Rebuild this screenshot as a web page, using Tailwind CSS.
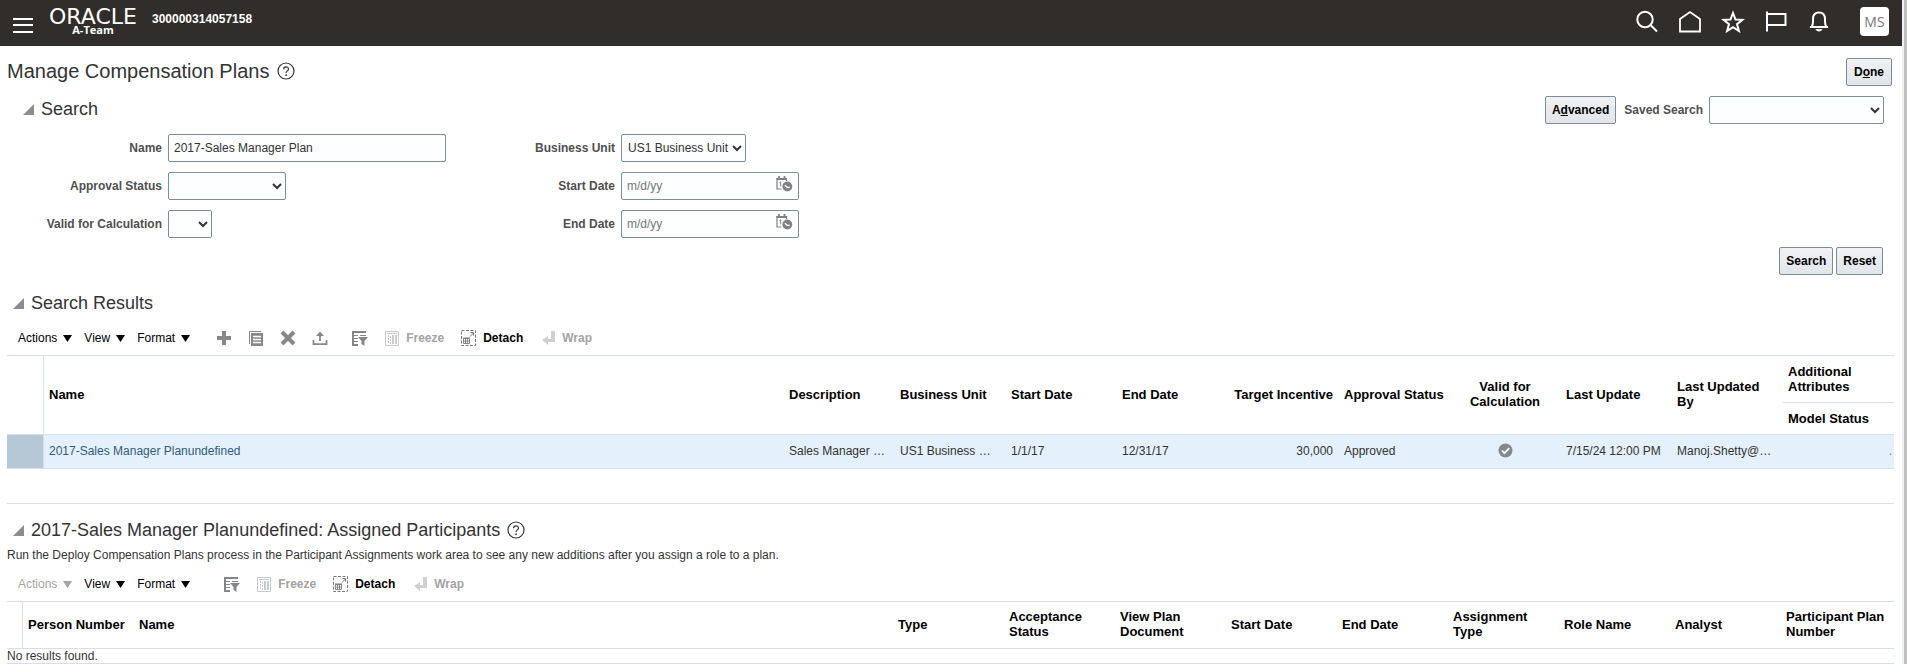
<!DOCTYPE html>
<html lang="en">
<head>
    <meta charset="UTF-8">
    <meta name="viewport" content="width=device-width, initial-scale=1.0">
    <title>Manage Compensation Plans</title>
    <script src="https://cdn.jsdelivr.net/npm/@tailwindcss/browser@4"></script>
</head>
<body class="flex min-h-screen bg-white font-['Liberation_Sans',Arial,sans-serif] text-xs text-[#333]">

<!-- Icon sprite -->
<svg class="hidden" aria-hidden="true">
    <symbol id="i-help" viewBox="0 0 18 18">
        <circle cx="9" cy="9" r="8" fill="none" stroke="#333" stroke-width="1.2"/>
        <path d="M6.6 7.2c0-3.2 4.9-3.1 4.9-.2 0 1.9-2.4 1.9-2.4 4" fill="none" stroke="#333" stroke-width="1.2"/>
        <circle cx="9.1" cy="13.2" r=".9" fill="#333"/>
    </symbol>
    <symbol id="i-disclose" viewBox="0 0 11 11">
        <path d="M11 0v11H0z" fill="#8a8c90"/>
    </symbol>
    <symbol id="i-caret" viewBox="0 0 9 7">
        <path d="M0 0h9L4.5 7z" fill="currentColor"/>
    </symbol>
    <symbol id="i-filter" viewBox="0 0 16 16">
        <path d="M0 1h14v2H2v11h4v2H0z" fill="#85878b"/>
        <path d="M2 5.500h4M8 5.500h6M2 8.500h4M2 11.500h4" stroke="#85878b" stroke-width="1"/>
        <path d="M6 7h10l-3.500 4v5l-3-2v-3z" fill="#85878b"/>
    </symbol>
    <symbol id="i-freeze" viewBox="0 0 15 15">
        <path d="M.5.500h13v14H.5z" fill="none" stroke="#c9cacb"/>
        <path d="M2 2.500h10" stroke="#c9cacb"/>
        <path d="M3.500 4v9M5.500 5v8" stroke="#c9cacb" stroke-dasharray="2 1"/>
        <path d="M8 4v9M11 4v9" stroke="#c9cacb" stroke-width="2"/>
    </symbol>
    <symbol id="i-detach" viewBox="0 0 16 16">
        <path d="M.5.500h14v15H.5z" fill="none" stroke="#777" stroke-dasharray="3 1.500"/>
        <path d="M2.500 8.500h6v5h-6zM2.500 11h6M4.500 8v5.500M6.500 8v5.500" fill="none" stroke="#888"/>
        <path d="M2 8h7" stroke="#777"/>
        <path d="M9 6.500l3.500-3.500M9.500 2.500h3v3" fill="none" stroke="#777"/>
    </symbol>
    <symbol id="i-wrap" viewBox="0 0 14 14">
        <path d="M9 0h4v11H6v3L0 9l6-4v3h3z" fill="#cfd0d1"/>
    </symbol>
    <symbol id="i-calendar" viewBox="0 0 17 16">
        <path d="M10.500 5V2.500H1v10.500h4.500" fill="none" stroke="#7f8184" stroke-width="1.200"/>
        <path d="M.5 3h10.500M3 0v3M8.500 0v3" stroke="#7f8184" stroke-width="1.800"/>
        <path d="M3.500 6.500L4.700 5.700V10.500" fill="none" stroke="#7f8184"/>
        <circle cx="11.300" cy="10.500" r="4.900" fill="#7f8184"/>
        <path d="M8.800 9.300l2.500 2h2.500" fill="none" stroke="#fff" stroke-width="1.200"/>
    </symbol>
</svg>

<div class="min-w-0 flex-1">
    <!-- Header -->
    <header class="flex h-[46px] items-start justify-between bg-[#312d2a] pr-[13px] pl-[13px] text-white">
        <div class="flex">
            <button type="button" aria-label="Navigator" class="pt-[15px]">
                <svg class="h-4 w-5" viewBox="0 0 20 16"><path d="M0 2h20M0 8h20M0 15h20" stroke="#fff" stroke-width="2"/></svg>
            </button>
            <a href="#" class="ml-2 flex w-[104px] flex-col items-center pt-[9px]">
                <span class="h-4 font-['DejaVu_Sans',sans-serif] text-[22px] leading-4">ORACLE</span>
                <span class="font-['Open_Sans',sans-serif] text-[11px] leading-[10px] font-bold">A-Team</span>
            </a>
            <span class="ml-[7px] pt-[11px] leading-4 font-bold">300000314057158</span>
        </div>
        <div class="flex items-center pt-[7px]">
            <div class="flex gap-[19px]">
                <button type="button" aria-label="Search">
                    <svg class="size-6" viewBox="0 0 24 24" fill="none" stroke="#fff" stroke-width="2"><circle cx="10" cy="9.500" r="7.700"/><path d="M15.500 15l6.500 6.500"/></svg>
                </button>
                <button type="button" aria-label="Home">
                    <svg class="size-6" viewBox="0 0 24 24" fill="none" stroke="#fff" stroke-width="1.800"><path d="M2 21.500V9L12 2l10 7v12.500z"/></svg>
                </button>
                <button type="button" aria-label="Favorites">
                    <svg class="size-6" viewBox="0 0 24 24" fill="none" stroke="#fff" stroke-width="2"><path d="M12 3l2.500 6.500 7 .3-5.500 4.300 1.900 6.900L12 17.100l-5.900 3.900L8 14.100 2.500 9.800l7-.3z"/></svg>
                </button>
                <button type="button" aria-label="Watchlist">
                    <svg class="size-6" viewBox="0 0 24 24" fill="none" stroke="#fff" stroke-width="2"><path d="M3 1.500v20M3 4h18.500v11H3"/></svg>
                </button>
                <button type="button" aria-label="Notifications">
                    <svg class="size-6" viewBox="0 0 24 24" fill="none" stroke="#fff" stroke-width="2"><path d="M4.500 17C6.500 14.500 6 12.500 6 9c0-4.500 2.500-6.500 6-6.500S18 4.500 18 9c0 3.500-.5 5.500 1.500 8zM3 17h18"/><path d="M8.500 19h7c-.7 3.300-6.300 3.300-7 0z" fill="#fff" stroke="none"/></svg>
                </button>
            </div>
            <button type="button" class="ml-[29px] size-[29px] rounded bg-white font-['Open_Sans',sans-serif] text-sm text-[#777]">MS</button>
        </div>
    </header>

    <main class="pt-3 pr-2 pl-[7px]">
        <div class="flex h-7 items-center justify-between pr-[2px]">
            <h1 class="flex items-center gap-2 pb-[2px] text-xl">Manage Compensation Plans <svg class="size-[18px]"><use href="#i-help"/></svg></h1>
            <button type="button" class="h-7 rounded-xs border border-[#7b8b98] bg-linear-to-b from-[#f0f2f4] to-[#e1e5e9] px-[7px] font-bold text-black">D<u>o</u>ne</button>
        </div>

        <!-- Search -->
        <section>
            <div class="mt-[10px] flex h-7 items-center justify-between pr-[10px] pl-4">
                <h2 class="flex items-center gap-[7px] pb-[2px] text-lg"><svg class="size-[11px]"><use href="#i-disclose"/></svg>Search</h2>
                <div class="flex items-center">
                    <button type="button" class="mr-2 h-7 rounded-xs border border-[#7b8b98] bg-linear-to-b from-[#f0f2f4] to-[#e1e5e9] px-[6px] font-bold text-black">A<u>d</u>vanced</button>
                    <label for="saved-search" class="mr-[6px] font-bold text-[#4f4f4f]">Saved Search</label>
                    <select id="saved-search" class="h-7 w-[175px] rounded-xs border border-[#7b8e9b] bg-[#fcfeff]"><option></option></select>
                </div>
            </div>

            <form>
                <div class="mt-[10px] grid grid-cols-[155px_278px_163px_178px] items-center gap-x-[6px] gap-y-[10px]">
                    <label for="name" class="text-right font-bold text-[#4f4f4f]">Name</label>
                    <input id="name" type="text" value="2017-Sales Manager Plan" class="h-7 w-full rounded-xs border border-[#7b8e9b] bg-[#fcfeff] px-[5px]">
                    <label for="business-unit" class="text-right font-bold text-[#4f4f4f]">Business Unit</label>
                    <select id="business-unit" class="h-7 w-[125px] rounded-xs border border-[#7b8e9b] bg-[#fcfeff] pl-[2px]"><option>US1 Business Unit</option></select>

                    <label for="approval-status" class="text-right font-bold text-[#4f4f4f]">Approval Status</label>
                    <select id="approval-status" class="h-7 w-[118px] rounded-xs border border-[#7b8e9b] bg-[#fcfeff]"><option></option></select>
                    <label for="start-date" class="text-right font-bold text-[#4f4f4f]">Start Date</label>
                    <div class="flex h-7 rounded-xs border border-[#7b8e9b] bg-[#fcfeff] pr-[5px] pl-[5px]">
                        <input id="start-date" type="text" placeholder="m/d/yy" class="min-w-0 flex-1 placeholder:text-[#757575]">
                        <button type="button" aria-label="Select start date" class="pb-1"><svg class="h-4 w-[17px]"><use href="#i-calendar"/></svg></button>
                    </div>

                    <label for="valid-calc" class="text-right font-bold text-[#4f4f4f]">Valid for Calculation</label>
                    <select id="valid-calc" class="h-7 w-11 rounded-xs border border-[#7b8e9b] bg-[#fcfeff]"><option></option></select>
                    <label for="end-date" class="text-right font-bold text-[#4f4f4f]">End Date</label>
                    <div class="flex h-7 rounded-xs border border-[#7b8e9b] bg-[#fcfeff] pr-[5px] pl-[5px]">
                        <input id="end-date" type="text" placeholder="m/d/yy" class="min-w-0 flex-1 placeholder:text-[#757575]">
                        <button type="button" aria-label="Select end date" class="pb-1"><svg class="h-4 w-[17px]"><use href="#i-calendar"/></svg></button>
                    </div>
                </div>
                <div class="mt-[9px] flex justify-end gap-[3px] pr-[11px]">
                    <button type="button" class="h-7 rounded-xs border border-[#7b8b98] bg-linear-to-b from-[#f0f2f4] to-[#e1e5e9] px-[6px] font-bold text-black">Search</button>
                    <button type="reset" class="h-7 rounded-xs border border-[#7b8b98] bg-linear-to-b from-[#f0f2f4] to-[#e1e5e9] px-[6px] font-bold text-black">Reset</button>
                </div>
            </form>
        </section>

        <!-- Search results -->
        <section class="mt-[15px]">
            <h2 class="flex h-[26px] items-center gap-[7px] pl-[6px] text-lg"><svg class="size-[11px]"><use href="#i-disclose"/></svg>Search Results</h2>
            <div class="mt-[5px] flex h-[34px] items-center pl-[11px] text-black">
                <div class="flex gap-3">
                    <button type="button" class="flex items-center gap-[6px]">Actions <svg class="h-[7px] w-[9px]"><use href="#i-caret"/></svg></button>
                    <button type="button" class="flex items-center gap-[6px]">View <svg class="h-[7px] w-[9px]"><use href="#i-caret"/></svg></button>
                    <button type="button" class="flex items-center gap-[6px]">Format <svg class="h-[7px] w-[9px]"><use href="#i-caret"/></svg></button>
                </div>
                <div class="ml-[26px] flex gap-4">
                    <button type="button" aria-label="Create"><svg class="size-4" viewBox="0 0 16 16"><path d="M8 1v14M1 8h14" stroke="#85878b" stroke-width="4"/></svg></button>
                    <button type="button" aria-label="Duplicate"><svg class="size-4" viewBox="0 0 16 16"><path d="M1.500 14V1.500H13" fill="none" stroke="#85878b"/><path d="M3 3h12v13H3z" fill="#85878b"/><path d="M5 6.500h8M5 9.500h8M5 12.500h8" stroke="#fff" stroke-width="1.300"/></svg></button>
                    <button type="button" aria-label="Delete"><svg class="size-4" viewBox="0 0 16 16"><path d="M2 2l12 12M14 2L2 14" stroke="#85878b" stroke-width="4"/></svg></button>
                    <button type="button" aria-label="Export"><svg class="size-4" viewBox="0 0 16 16"><path d="M1.500 10v4.200h13V10M8 11V4" fill="none" stroke="#85878b" stroke-width="1.800"/><path d="M4 6l4-4.500L12 6z" fill="#85878b"/></svg></button>
                </div>
                <div class="ml-6 flex items-center">
                    <button type="button" aria-label="Query by example"><svg class="size-4"><use href="#i-filter"/></svg></button>
                    <button type="button" disabled class="ml-[17px] flex items-center gap-[6px] font-bold text-[#a3a3a3]"><svg class="size-[15px]"><use href="#i-freeze"/></svg>Freeze</button>
                    <button type="button" class="ml-[17px] flex items-center gap-[6px] font-bold"><svg class="size-4"><use href="#i-detach"/></svg>Detach</button>
                    <button type="button" disabled class="ml-[19px] flex items-center gap-[6px] font-bold text-[#a3a3a3]"><svg class="size-[14px]"><use href="#i-wrap"/></svg>Wrap</button>
                </div>
            </div>

            <table class="w-full table-fixed border-separate border-spacing-0 border-t border-[#d6dfe6] text-left">
                <colgroup>
                    <col class="w-[37px]">
                    <col>
                    <col class="w-[111px]">
                    <col class="w-[111px]">
                    <col class="w-[111px]">
                    <col class="w-[111px]">
                    <col class="w-[111px]">
                    <col class="w-[111px]">
                    <col class="w-[111px]">
                    <col class="w-[111px]">
                    <col class="w-[111px]">
                    <col class="w-[111px]">
                </colgroup>
                <thead class="text-[13px] leading-[15px] text-black">
                    <tr class="h-[47px]">
                        <td rowspan="2" class="border-r border-b border-[#d6dfe6]"></td>
                        <th rowspan="2" class="border-b border-[#d6dfe6] pr-[6px] pb-[2px] pl-[5px]">Name</th>
                        <th rowspan="2" class="border-b border-[#d6dfe6] pr-[6px] pb-[2px] pl-[5px]">Description</th>
                        <th rowspan="2" class="border-b border-[#d6dfe6] pr-[6px] pb-[2px] pl-[5px]">Business Unit</th>
                        <th rowspan="2" class="border-b border-[#d6dfe6] pr-[6px] pb-[2px] pl-[5px]">Start Date</th>
                        <th rowspan="2" class="border-b border-[#d6dfe6] pr-[6px] pb-[2px] pl-[5px]">End Date</th>
                        <th rowspan="2" class="border-b border-[#d6dfe6] pr-[6px] pb-[2px] pl-[5px] text-right">Target Incentive</th>
                        <th rowspan="2" class="border-b border-[#d6dfe6] pr-[6px] pb-[2px] pl-[5px]">Approval Status</th>
                        <th rowspan="2" class="border-b border-[#d6dfe6] pr-[6px] pb-[2px] pl-[5px] text-center">Valid for Calculation</th>
                        <th rowspan="2" class="border-b border-[#d6dfe6] pr-[6px] pb-[2px] pl-[5px]">Last Update</th>
                        <th rowspan="2" class="border-b border-[#d6dfe6] pr-[6px] pb-[2px] pl-[5px]">Last Updated By</th>
                        <th class="border-b border-[#d6dfe6] pr-[6px] pl-[5px]">Additional Attributes</th>
                    </tr>
                    <tr class="h-8">
                        <th class="border-b border-[#d6dfe6] pr-[6px] pl-[5px]">Model Status</th>
                    </tr>
                </thead>
                <tbody>
                    <tr class="h-[34px] bg-[#e4f0fb]">
                        <td class="border-r border-b border-[#d6dfe6] bg-[#b6c8d6]"></td>
                        <td class="truncate border-b border-[#d6dfe6] pr-[6px] pb-[2px] pl-[5px]"><a href="#" class="text-[#315c7c]">2017-Sales Manager Planundefined</a></td>
                        <td class="truncate border-b border-[#d6dfe6] pr-[6px] pb-[2px] pl-[5px]">Sales Manager Plan</td>
                        <td class="truncate border-b border-[#d6dfe6] pr-3 pb-[2px] pl-[5px]">US1 Business Unit</td>
                        <td class="border-b border-[#d6dfe6] pr-[6px] pb-[2px] pl-[5px]">1/1/17</td>
                        <td class="border-b border-[#d6dfe6] pr-[6px] pb-[2px] pl-[5px]">12/31/17</td>
                        <td class="border-b border-[#d6dfe6] pr-[6px] pb-[2px] pl-[5px] text-right">30,000</td>
                        <td class="border-b border-[#d6dfe6] pr-[6px] pb-[2px] pl-[5px]">Approved</td>
                        <td class="border-b border-[#d6dfe6] pr-[6px] pb-[2px] pl-[5px]">
                            <svg class="mx-auto size-[15px]" viewBox="0 0 15 15"><circle cx="7.500" cy="7.500" r="7" fill="#85888d"/><path d="M4 7.500l2.500 2.700 4.700-5" fill="none" stroke="#fff" stroke-width="1.800"/></svg>
                        </td>
                        <td class="border-b border-[#d6dfe6] pb-[2px] pl-[5px] whitespace-nowrap">7/15/24 12:00 PM</td>
                        <td class="truncate border-b border-[#d6dfe6] pr-[6px] pb-[2px] pl-[5px]">Manoj.Shetty@oracle.com</td>
                        <td class="border-b border-[#d6dfe6] pr-[2px] pb-[2px] text-right text-[#777]">.</td>
                    </tr>
                </tbody>
            </table>
        </section>

        <!-- Assigned participants -->
        <section class="mt-[34px] border-t border-[#d9dfe2] pt-[13px]">
            <h2 class="flex h-[26px] items-center gap-[7px] pl-[6px] text-lg"><svg class="size-[11px]"><use href="#i-disclose"/></svg>2017-Sales Manager Planundefined: Assigned Participants <svg class="size-[18px]"><use href="#i-help"/></svg></h2>
            <p class="leading-6">Run the Deploy Compensation Plans process in the Participant Assignments work area to see any new additions after you assign a role to a plan.</p>
            <div class="flex h-[34px] items-center pl-[11px] text-black">
                <div class="flex gap-3">
                    <button type="button" disabled class="flex items-center gap-[6px] text-[#a3a3a3]">Actions <svg class="h-[7px] w-[9px]"><use href="#i-caret"/></svg></button>
                    <button type="button" class="flex items-center gap-[6px]">View <svg class="h-[7px] w-[9px]"><use href="#i-caret"/></svg></button>
                    <button type="button" class="flex items-center gap-[6px]">Format <svg class="h-[7px] w-[9px]"><use href="#i-caret"/></svg></button>
                </div>
                <div class="ml-[34px] flex items-center">
                    <button type="button" aria-label="Query by example"><svg class="size-4"><use href="#i-filter"/></svg></button>
                    <button type="button" disabled class="ml-[17px] flex items-center gap-[6px] font-bold text-[#a3a3a3]"><svg class="size-[15px]"><use href="#i-freeze"/></svg>Freeze</button>
                    <button type="button" class="ml-[17px] flex items-center gap-[6px] font-bold"><svg class="size-4"><use href="#i-detach"/></svg>Detach</button>
                    <button type="button" disabled class="ml-[19px] flex items-center gap-[6px] font-bold text-[#a3a3a3]"><svg class="size-[14px]"><use href="#i-wrap"/></svg>Wrap</button>
                </div>
            </div>

            <table class="w-full table-fixed border-separate border-spacing-0 border-t border-[#d6dfe6] text-left">
                <colgroup>
                    <col class="w-4">
                    <col class="w-[111px]">
                    <col>
                    <col class="w-[111px]">
                    <col class="w-[111px]">
                    <col class="w-[111px]">
                    <col class="w-[111px]">
                    <col class="w-[111px]">
                    <col class="w-[111px]">
                    <col class="w-[111px]">
                    <col class="w-[111px]">
                    <col class="w-[113px]">
                </colgroup>
                <thead class="text-[13px] leading-[15px] text-black">
                    <tr class="h-[47px]">
                        <td class="border-r border-b border-[#d6dfe6]"></td>
                        <th class="border-b border-[#d6dfe6] pr-[6px] pb-[2px] pl-[5px] whitespace-nowrap">Person Number</th>
                        <th class="border-b border-[#d6dfe6] pr-[6px] pb-[2px] pl-[5px]">Name</th>
                        <th class="border-b border-[#d6dfe6] pr-[6px] pb-[2px] pl-[5px]">Type</th>
                        <th class="border-b border-[#d6dfe6] pr-[6px] pb-[2px] pl-[5px]">Acceptance Status</th>
                        <th class="border-b border-[#d6dfe6] pr-[6px] pb-[2px] pl-[5px]">View Plan Document</th>
                        <th class="border-b border-[#d6dfe6] pr-[6px] pb-[2px] pl-[5px]">Start Date</th>
                        <th class="border-b border-[#d6dfe6] pr-[6px] pb-[2px] pl-[5px]">End Date</th>
                        <th class="border-b border-[#d6dfe6] pr-[6px] pb-[2px] pl-[5px]">Assignment Type</th>
                        <th class="border-b border-[#d6dfe6] pr-[6px] pb-[2px] pl-[5px]">Role Name</th>
                        <th class="border-b border-[#d6dfe6] pr-[6px] pb-[2px] pl-[5px]">Analyst</th>
                        <th class="border-b border-[#d6dfe6] pr-[6px] pb-[2px] pl-[5px]">Participant Plan Number</th>
                    </tr>
                </thead>
                <tbody>
                    <tr>
                        <td colspan="12" class="border-b border-[#d6dfe6] leading-[14px]">No results found.</td>
                    </tr>
                </tbody>
            </table>
        </section>
    </main>
</div>

<!-- Right edge of the scroll pane -->
<div class="w-[5px] border-r-3 border-[#c1c1c1] bg-[#f1f1f1]"></div>

</body>
</html>
